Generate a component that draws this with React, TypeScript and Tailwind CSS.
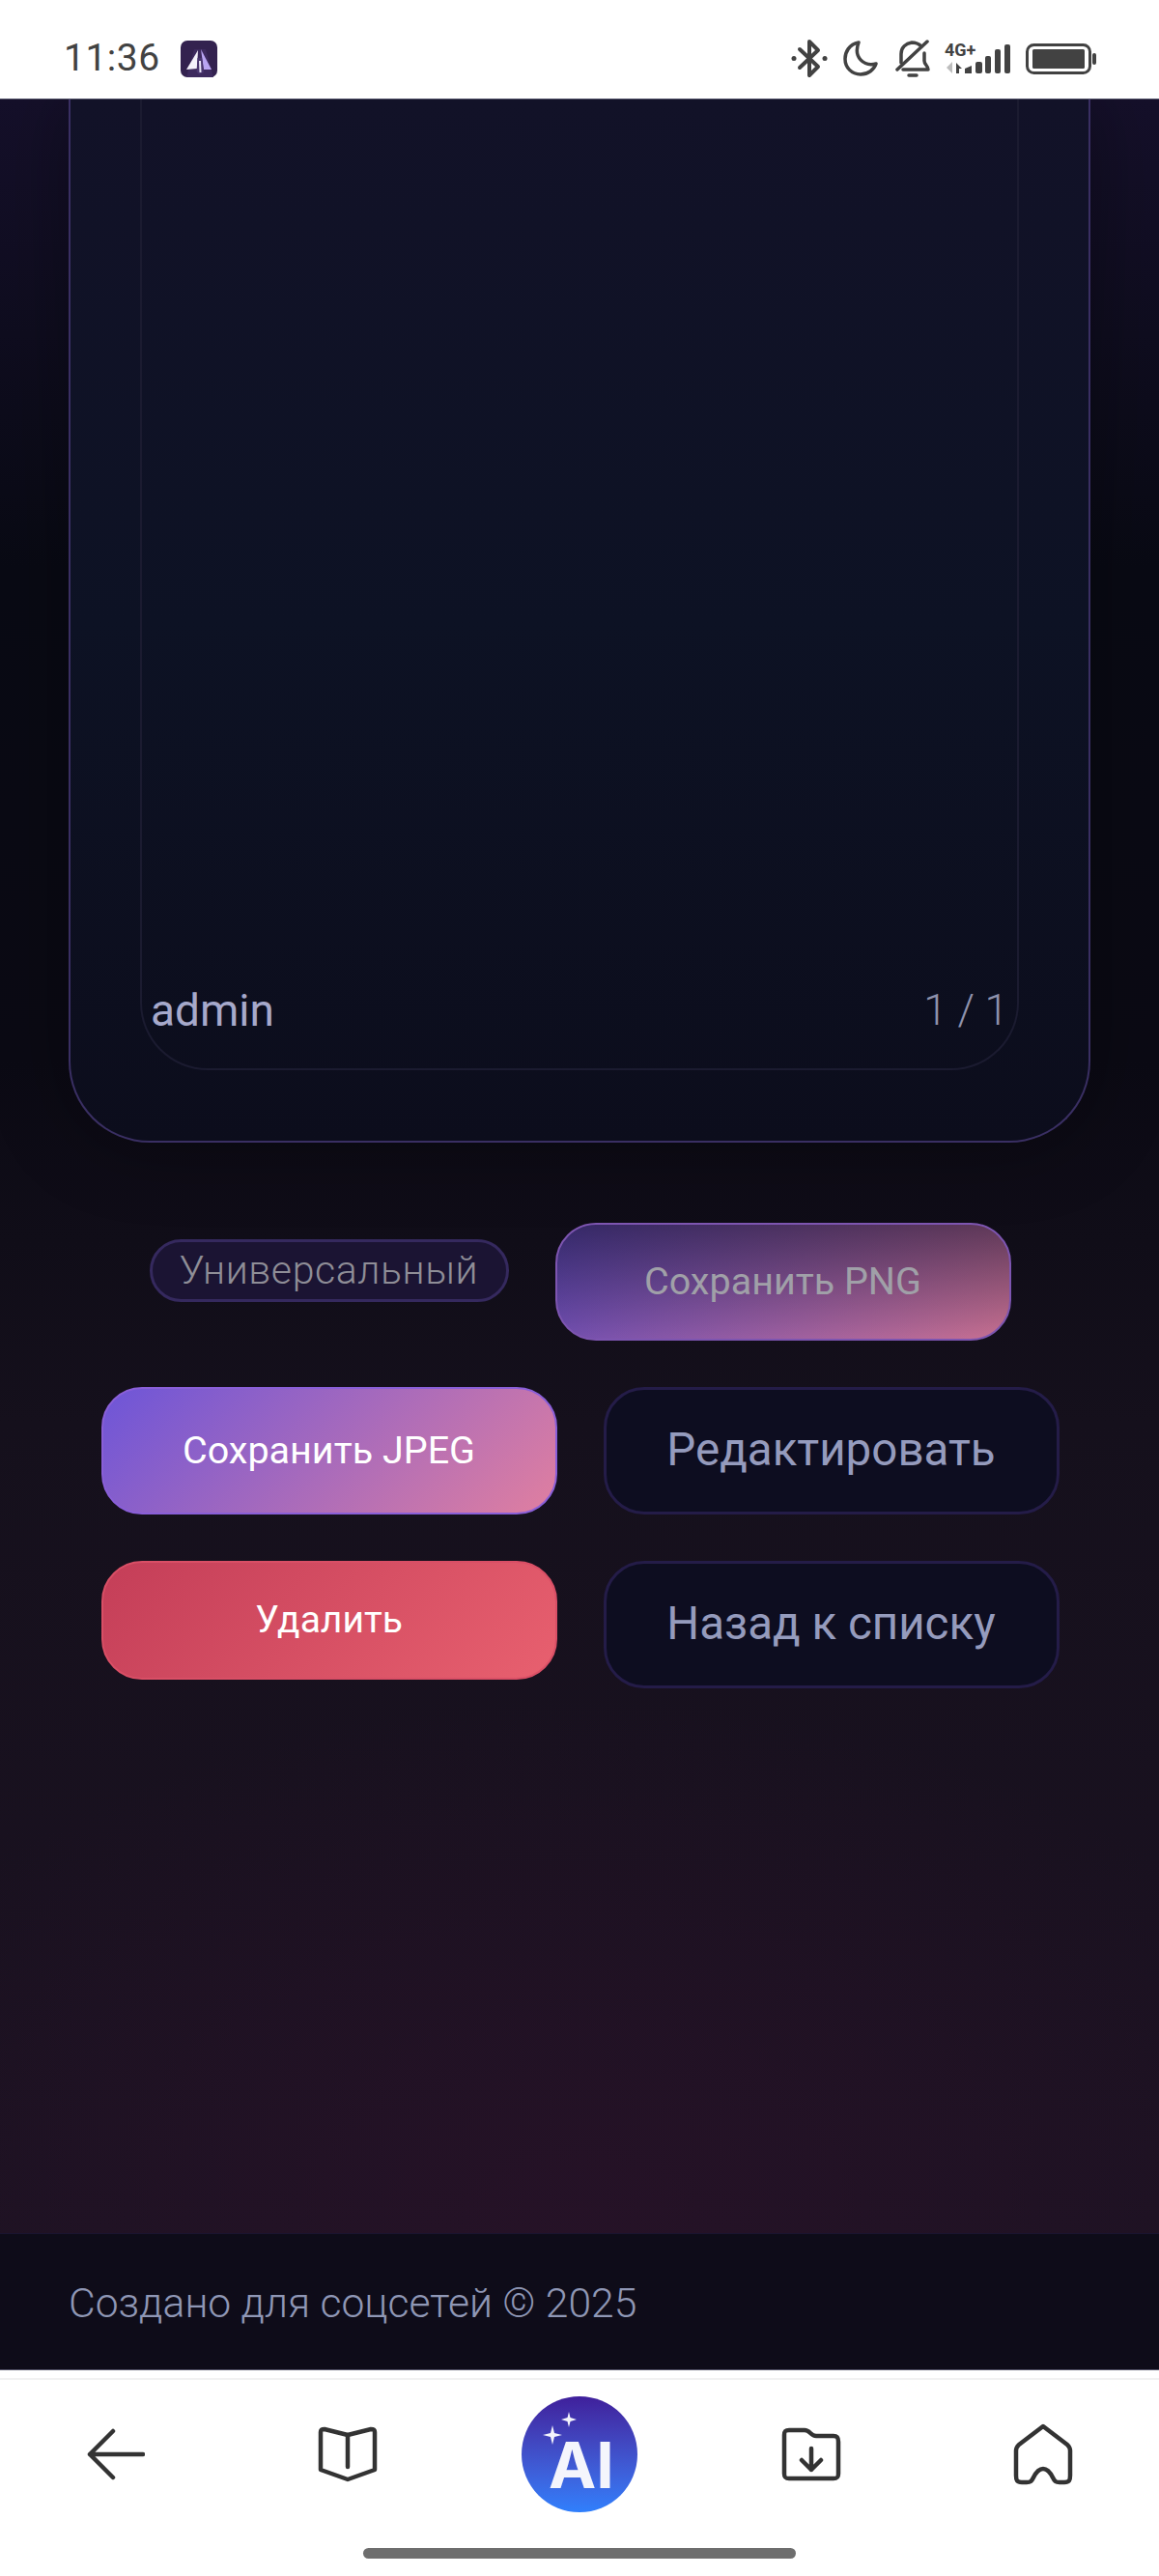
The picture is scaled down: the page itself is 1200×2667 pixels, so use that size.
const roboto = "font-['Roboto',sans-serif]";

function AppIcon() {
  return (
    <svg width="38" height="38" viewBox="0 0 38 38">
      <rect width="38" height="38" rx="7" fill="#33224f" />
      <path d="M14 9 L26 9 L34 38 L6 38 Z" fill="#3d2a5e" />
      <path d="M18 10 L17 29 L6 30 Z" fill="#f4f2fb" />
      <path d="M21 9 L32 30 L24 30 Z" fill="#b9a5f2" />
      <path d="M17.5 18 L22 18 L24 33 L19 35 L16.5 32 Z" fill="#4a3770" />
      <path d="M19 21 L21 21 L21.500 33 L19.500 33 Z" fill="#e9e4f7" />
    </svg>
  );
}

function StatusIcons() {
  const dark = '#424242';
  return (
    <div className="flex items-center">
      <svg width="38" height="41" viewBox="0 0 38 41" fill="none" stroke={dark} strokeWidth="4" strokeLinecap="round" strokeLinejoin="round">
        <path d="M9 11 L28 29 L19 38 V3 L28 12 L9 30" />
        <circle cx="3" cy="20.500" r="2.500" fill={dark} stroke="none" />
        <circle cx="35" cy="20.500" r="2.500" fill={dark} stroke="none" />
      </svg>
      <svg className="ml-4" width="36" height="37" viewBox="0 0 36 37" fill="none" stroke={dark} strokeWidth="3.500" strokeLinejoin="round">
        <path d="M16 2 C6 4 2 12 2 19 C2 28 9 35 18 35 C26 35 32 30 34 24 C22 27 10 18 16 2 Z" />
      </svg>
      <svg className="ml-[18px]" width="36" height="40" viewBox="0 0 36 40" fill="none" stroke={dark} strokeWidth="3.500" strokeLinecap="round" strokeLinejoin="round">
        <path d="M6 24 V15 C6 8 11 4 17 3 C21 3 24 4 27 7" />
        <path d="M30 14 V22 C30 26 34 27 34 31 H8" />
        <path d="M2 31 L33 2" />
        <path d="M14 37 H22" />
      </svg>
      <div className="relative ml-[15px] h-[30px] w-[68px]">
        <span className={`absolute left-0 top-[-4px] text-[18px] leading-[20px] font-bold text-[#424242] ${roboto}`}>4G+</span>
        <svg width="68" height="30" viewBox="0 0 68 30" fill={dark}>
          <path d="M8 18 V30 L2 24 Z" fill="#bdbdbd" />
          <path d="M12 19 L18 25 H15 V30 H12 Z" />
          <path d="M21 25 L28 22 V30 H21 Z" />
          <rect x="32" y="18" width="7" height="12" rx="2" />
          <rect x="42" y="12" width="6" height="18" rx="2" />
          <rect x="52" y="5" width="6" height="25" rx="2" />
          <rect x="62" y="0" width="6" height="30" rx="2" />
        </svg>
      </div>
      <svg className="ml-4" width="73" height="32" viewBox="0 0 73 32">
        <rect x="1.500" y="1.500" width="65" height="29" rx="7" fill="none" stroke={dark} strokeWidth="3" />
        <rect x="7" y="6" width="54" height="20" rx="1.500" fill={dark} />
        <rect x="69" y="10" width="4" height="12" rx="2" fill={dark} />
      </svg>
    </div>
  );
}

function Actions() {
  const secondary = `flex h-[132px] w-[472px] items-center justify-center rounded-[42px] border-[3px] border-[#241c48] bg-[#0d0d20] text-[47.5px] text-[#959bbd] ${roboto}`;
  return (
    <div className="mt-[83px] ml-px flex w-[1000px] flex-wrap items-start justify-center gap-12 self-center">
      <span className={`mt-[17px] flex h-[65px] w-[372px] items-center justify-center rounded-full border-[3px] border-[#35295e] bg-[#1b1433] text-[41px] font-light tracking-[0.6px] text-[#8f8e97] ${roboto}`}>
        Универсальный
      </span>
      <button className={`h-[122px] w-[472px] rounded-[42px] border-2 border-[#7d55b0] bg-[linear-gradient(180deg,rgba(13,10,24,0.5),rgba(13,10,24,0)),linear-gradient(135deg,#5d47b8,#c87090)] text-[39.5px] text-[#a0a0a8] ${roboto}`}>
        Сохранить PNG
      </button>
      <button className={`h-[132px] w-[472px] rounded-[42px] border-2 border-[#8a5fd8] bg-[linear-gradient(135deg,#6d55d8,#e07fa0)] text-[39.5px] text-white ${roboto}`}>
        Сохранить JPEG
      </button>
      <button className={secondary}>Редактировать</button>
      <button className={`h-[123px] w-[472px] rounded-[42px] border-2 border-[#d94f66] bg-[linear-gradient(135deg,#c43e58,#e8606f)] text-[39px] text-white ${roboto}`}>
        Удалить
      </button>
      <button className={secondary}>Назад к списку</button>
    </div>
  );
}

function BottomNav() {
  const icon = { fill: 'none', stroke: '#333333', strokeWidth: 4.5, strokeLinecap: 'round', strokeLinejoin: 'round' } as const;
  return (
    <nav className="bg-white pb-[18px]">
      <div className="mt-2 h-0.5 bg-[#f2f2f2]" />
      <div className="mt-[17px] grid grid-cols-5 items-center justify-items-center">
        <svg width="60" height="54" viewBox="0 0 60 54" {...icon}>
          <path d="M58 27 H3 M27 3 L3 27 L27 51" />
        </svg>
        <svg width="62" height="58" viewBox="0 0 62 58" {...icon}>
          <path d="M31 9 L7 3 C4 3 3 4 3 6 V45 L31 55 L59 45 V6 C59 4 58 3 55 3 Z" />
          <path d="M31 9 V42" />
        </svg>
        <div className="relative flex h-[120px] w-[120px] items-center justify-center rounded-full bg-linear-to-b from-[#3f1f9b] to-[#2f7ffc]">
          <span className="mt-[22px] ml-[4px] font-['Inter',sans-serif] text-[66px] leading-none font-bold text-[#f4f5fc]">AI</span>
          <svg className="absolute left-[21px] top-[16px]" width="40" height="40" viewBox="0 0 40 40" fill="#f4f5fc">
            <path d="M11 14 L13 22 L21 24 L13 26 L11 34 L9 26 L1 24 L9 22 Z" />
            <path d="M28 0 L29.500 6 L36 8 L29.500 10 L28 16 L26.500 10 L20 8 L26.500 6 Z" />
          </svg>
        </div>
        <svg width="62" height="56" viewBox="0 0 62 56" {...icon}>
          <path d="M3 8 C3 4 4 3 8 3 H24 C27 3 28 4 30 6 C32 8 33 9 36 9 H54 C58 9 59 11 59 15 V48 C59 52 58 53 54 53 H8 C4 53 3 52 3 48 Z" />
          <path d="M31 22 V44 M21 34 L31 44 L41 34" />
        </svg>
        <svg width="62" height="64" viewBox="0 0 62 64" {...icon}>
          <path d="M31 3 L56 22 C58 24 59 25 59 28 V54 C59 59 58 61 53 61 H48 C44 61 43 60 41 56 C38 50 35 47 31 47 C27 47 24 50 21 56 C19 60 18 61 14 61 H9 C4 61 3 59 3 54 V28 C3 25 4 24 6 22 Z" />
        </svg>
      </div>
      <div className="mx-auto mt-[37px] h-[11px] w-[448px] rounded-full bg-[#6e6e6e]" />
    </nav>
  );
}

export default function App() {
  return (
    <div className="flex h-[2667px] w-[1200px] flex-col overflow-hidden bg-white">
      <header className="flex h-[102px] shrink-0 items-center justify-between pt-[19px] pl-[66px] pr-[65px]">
        <div className="flex items-center gap-[21px]">
          <span className={`text-[39px] leading-none tracking-[0.5px] text-[#424242] ${roboto}`}>11:36</span>
          <AppIcon />
        </div>
        <StatusIcons />
      </header>
      <div className="h-px bg-[#55556a]" />

      <main className="flex flex-1 flex-col overflow-hidden bg-[radial-gradient(ellipse_70%_25%_at_50%_100%,rgba(40,18,40,0.8),rgba(40,18,40,0)),linear-gradient(180deg,#15102a_0%,#090a14_22%,#0b0a14_45%,#15101c_62%,#1c1222_100%)]">
        <section className="mx-[71px] flex h-[1080px] shrink-0 flex-col rounded-b-[84px] border-2 border-t-0 border-[#3a2f63] bg-linear-to-b from-[#121228] via-[#0d1224] to-[#0c0d1c] shadow-[0_0_80px_rgba(0,0,0,0.35)]">
          <div className="mx-[72px] flex h-[1005px] items-end justify-between rounded-b-[70px] border-2 border-t-0 border-[#1b1b30] pb-[32px] pl-[9px] pr-[9px]">
            <span className={`text-[46px] leading-[56px] text-[#a6a9cb] ${roboto}`}>admin</span>
            <span className={`text-[44px] leading-[56px] font-light text-[#8f92ac] ${roboto}`}>1 / 1</span>
          </div>
        </section>
        <Actions />
      </main>

      <footer className="flex h-[141px] shrink-0 items-center border-t border-[#1a1430] bg-[#0e0c19] px-[71px] pt-[3px]">
        <span className={`text-[42.6px] font-light text-[#8f97b5] ${roboto}`}>Создано для соцсетей © 2025</span>
      </footer>
      <div className="h-px bg-[#55556a]" />
      <BottomNav />
    </div>
  );
}
